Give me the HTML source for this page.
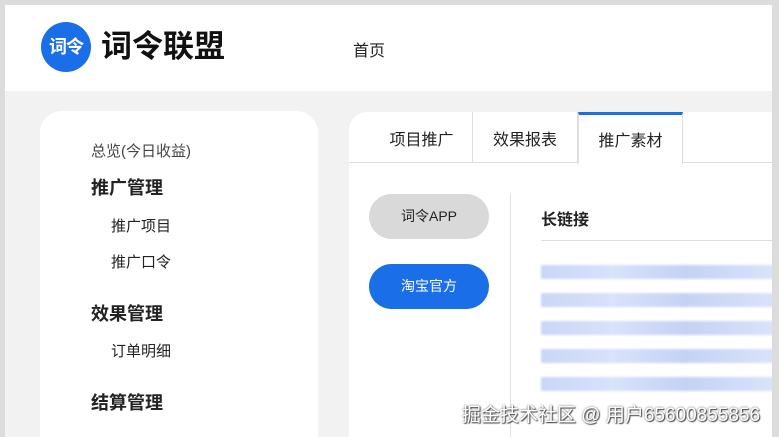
<!DOCTYPE html>
<html><head><meta charset="utf-8"><style>
*{margin:0;padding:0;box-sizing:border-box}
html,body{width:779px;height:437px;overflow:hidden}
body{background:#dcdcdc;font-family:"Liberation Sans","Noto Sans CJK SC",sans-serif;position:relative}
.page{position:absolute;left:5px;top:5px;width:767px;height:432px;background:#f2f2f2;overflow:hidden}
.hdr{position:absolute;left:0;top:0;width:767px;height:86px;background:#fff}
.logo{position:absolute;left:36px;top:17px;width:50px;height:50px;border-radius:50%;background:#1a6ee8;color:#fff;font-size:18px;font-weight:bold;line-height:50px;text-align:center;letter-spacing:-1px}
.brand{position:absolute;left:96px;top:22px;font-size:31px;font-weight:bold;color:#111;line-height:40px}
.nav{position:absolute;left:348px;top:32px;font-size:16px;color:#222}
.side{position:absolute;left:35px;top:106px;width:278px;height:326px;background:#fff;border-radius:22px 22px 0 0}
.side div{position:absolute;color:#222}
.main{position:absolute;left:344px;top:107px;width:423px;height:325px;background:#fff;border-radius:18px 0 0 0}
.tabs{position:absolute;left:0;top:0;width:423px;height:51px;border-bottom:1px solid #ddd}
.tab{position:absolute;top:0;height:51px;font-size:16px;color:#222;text-align:center;line-height:58px;border-right:1px solid #ddd}
.btn{position:absolute;left:20px;width:120px;height:45px;border-radius:23px;font-size:14px;text-align:center;line-height:45px}
.row{position:absolute;left:192px;height:14px;width:240px;background:linear-gradient(90deg,#c9d6f6,#d8e2fa 30%,#c4d2f5 60%,#dbe4fa);filter:blur(1px)}
.wm{position:absolute;left:462px;top:400px;font-size:19px;color:#fff;text-shadow:0 0 2px #555,1px 1px 1px #444;white-space:nowrap}
</style></head><body>
<div class="page">
<div class="hdr">
<div class="logo">词令</div>
<div class="brand">词令联盟</div>
<div class="nav">首页</div>
</div>
<div class="side">
<div style="left:51px;top:29px;font-size:15px;color:#444">总览(今日收益)</div>
<div style="left:51px;top:63px;font-size:18px;font-weight:bold">推广管理</div>
<div style="left:71px;top:104px;font-size:15px">推广项目</div>
<div style="left:71px;top:140px;font-size:15px">推广口令</div>
<div style="left:51px;top:189px;font-size:18px;font-weight:bold">效果管理</div>
<div style="left:71px;top:229px;font-size:15px">订单明细</div>
<div style="left:51px;top:278px;font-size:18px;font-weight:bold">结算管理</div>
</div>
<div class="main">
<div class="tabs">
<div class="tab" style="left:0;width:124px;padding-left:22px">项目推广</div>
<div class="tab" style="left:124px;width:105px">效果报表</div>
<div class="tab" style="left:229px;width:105px;border-top:3px solid #1a6ee8;border-left:1px solid #ddd;height:52px;background:#fff;line-height:54px">推广素材</div>
</div>
<div class="btn" style="top:82px;background:#d9d9d9;color:#222">词令APP</div>
<div class="btn" style="top:152px;background:#1a6ee8;color:#fff">淘宝官方</div>
<div style="position:absolute;left:161px;top:82px;width:1px;height:250px;background:#e2e2e2"></div>
<div style="position:absolute;left:192px;top:94px;font-size:16px;font-weight:bold;color:#222">长链接</div>
<div style="position:absolute;left:192px;top:128px;width:240px;height:1px;background:#ddd"></div>
<div class="row" style="top:153px"></div>
<div class="row" style="top:181px"></div>
<div class="row" style="top:209px"></div>
<div class="row" style="top:237px"></div>
<div class="row" style="top:265px"></div>
</div>
</div>
<div class="wm">掘金技术社区 @ 用户65600855856</div>
</body></html>
